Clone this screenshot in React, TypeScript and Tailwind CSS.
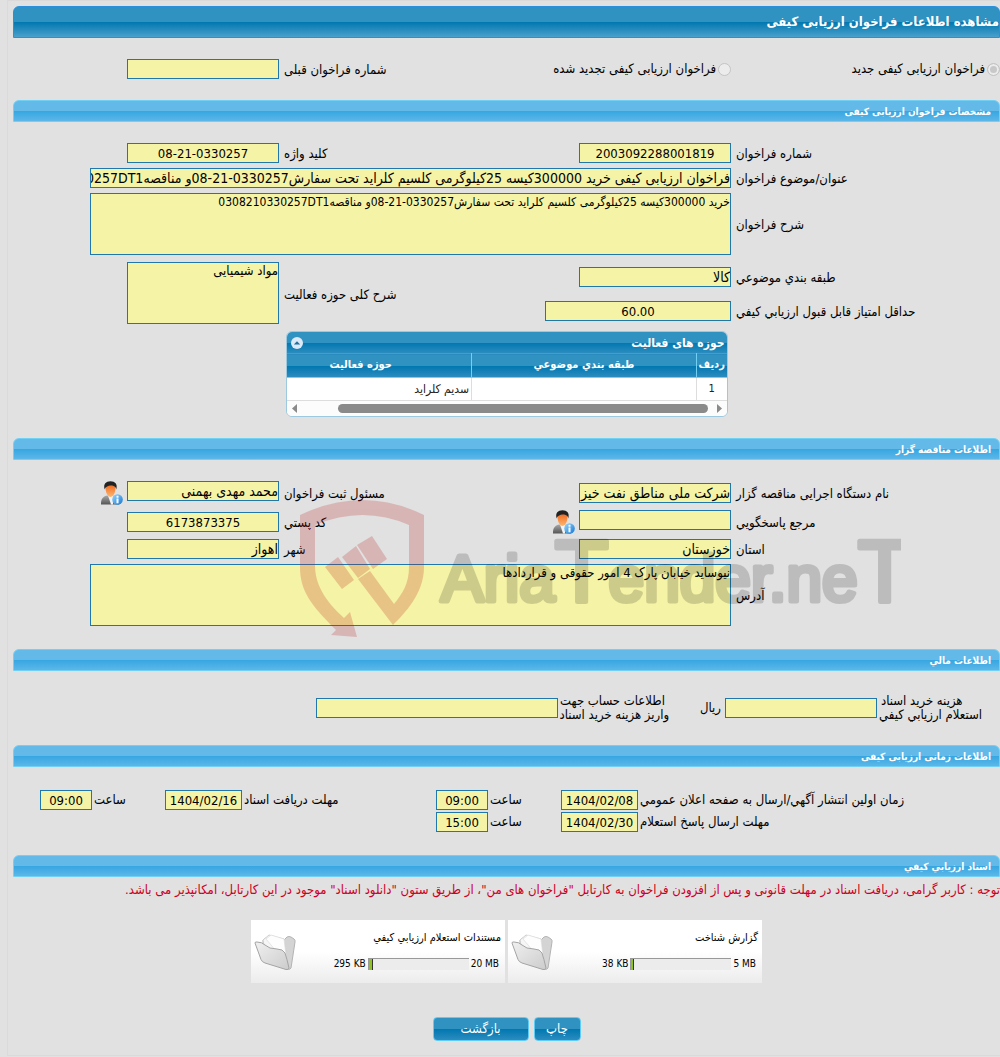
import type { ReactNode } from 'react';

type FieldProps = { id: string; value?: string; className?: string; center?: boolean };

const FIELD = 'block border border-[#1f77ab] bg-[#f5f3a5] px-0 text-black outline-none';

function Field({ id, value = '', className = 'w-[152px]', center }: FieldProps) {
  return (
    <input
      id={id}
      readOnly
      value={value}
      className={`${FIELD} h-5 ${center ? 'text-center text-[13px]' : 'text-sm'} ${className}`}
    />
  );
}

function Area({ id, value, className = 'w-full text-[13px]' }: FieldProps) {
  return (
    <textarea
      id={id}
      readOnly
      value={value}
      className={`${FIELD} h-[62px] resize-none leading-4 ${className}`}
    />
  );
}

function Label({ htmlFor, children }: { htmlFor: string; children: ReactNode }) {
  return (
    <label htmlFor={htmlFor} className="pt-0.5 text-left leading-4 whitespace-nowrap">
      {children}
    </label>
  );
}

function SectionBar({ children }: { children: ReactNode }) {
  return (
    <h2 className="flex h-[22px] items-center rounded-t-md border border-[#72d0f5] bg-[linear-gradient(#63bae9_0_50%,#36a6e1_50%,#5cb7e8)] px-2 text-[10px] font-bold text-white">
      {children}
    </h2>
  );
}

const ROW = 'grid grid-cols-[264fr_200fr_242fr_266fr] items-center gap-x-[5px]';

export default function App() {
  return (
    <div
      dir="rtl"
      className="relative min-h-screen overflow-hidden bg-[#e1e1e1] pl-[7px] font-['DejaVu_Sans_Condensed','DejaVu_Sans',sans-serif] text-[13px] text-black"
    >
      <form className="border-t border-b border-l border-[#dadada] pt-[5px] pl-[5px]">
        <h1 className="flex h-8 items-center rounded-t-md border border-[#2b90dc] bg-[linear-gradient(#2f92c1_0_50%,#0077b0_50%,#4aa0ca)] font-bold text-white">
          مشاهده اطلاعات فراخوان ارزیابی کیفی
        </h1>

        <div className={`${ROW} py-[21px]`}>
          <label className="flex items-center gap-0.5 whitespace-nowrap">
            <Radio checked />
            فراخوان ارزیابی کیفی جدید
          </label>
          <label className="flex items-center gap-0.5 whitespace-nowrap">
            <Radio />
            فراخوان ارزیابی کیفی تجدید شده
          </label>
          <Label htmlFor="prev">شماره فراخوان قبلی</Label>
          <Field id="prev" />
        </div>

        <SectionBar>مشخصات فراخوان ارزیابی کیفی</SectionBar>
        <div className="flex flex-col gap-[5px] py-[21px]">
          <div className={ROW}>
            <Label htmlFor="number">شماره فراخوان</Label>
            <Field id="number" value="2003092288001819" center />
            <Label htmlFor="keyword">کلید واژه</Label>
            <Field id="keyword" value="08-21-0330257" center />
          </div>
          <div className={ROW}>
            <Label htmlFor="title">عنوان/موضوع فراخوان</Label>
            <div className="col-span-3 pl-[77px]">
              <Field
                id="title"
                className="w-full"
                value="فراخوان ارزیابی کیفی خرید 300000کیسه 25کیلوگرمی کلسیم کلراید تحت سفارش0330257-21-08و مناقصه0308210330257DT1"
              />
            </div>
          </div>
          <div className={ROW}>
            <Label htmlFor="desc">شرح فراخوان</Label>
            <div className="col-span-3 pl-[77px]">
              <Area
                id="desc"
                className="w-full text-xs"
                value="خرید 300000کیسه 25کیلوگرمی کلسیم کلراید تحت سفارش0330257-21-08و مناقصه0308210330257DT1"
              />
            </div>
          </div>
          <div className={`${ROW} grid-rows-[30px_30px] gap-y-1 pt-0.5`}>
            <Label htmlFor="category">طبقه بندي موضوعي</Label>
            <Field id="category" value="کالا" />
            <div className="row-span-2 grid">
              <Label htmlFor="area">شرح کلی حوزه فعالیت</Label>
            </div>
            <div className="row-span-2 self-start">
              <Area id="area" className="w-[152px] text-[13px]" value="مواد شیمیایی" />
            </div>
            <Label htmlFor="score">حداقل امتیاز قابل قبول ارزیابي کیفي</Label>
            <Field id="score" className="w-[186px]" value="60.00" center />
          </div>
          <ActivityTable />
        </div>

        <SectionBar>اطلاعات مناقصه گزار</SectionBar>
        <div className="flex flex-col gap-[5px] pt-[21px] pb-[23px]">
          <div className={ROW}>
            <Label htmlFor="org">نام دستگاه اجرایی مناقصه گزار</Label>
            <Field id="org" value="شرکت ملی مناطق نفت خیز جنوب" />
            <Label htmlFor="owner">مسئول ثبت فراخوان</Label>
            <div className="flex h-6 gap-1">
              <Field id="owner" value="محمد مهدی بهمنی" />
              <PersonInfo />
            </div>
          </div>
          <div className={ROW}>
            <Label htmlFor="ref">مرجع پاسخگویي</Label>
            <div className="flex h-6 gap-1">
              <Field id="ref" />
              <PersonInfo />
            </div>
            <Label htmlFor="postal">کد پستي</Label>
            <Field id="postal" value="6173873375" center />
          </div>
          <div className={ROW}>
            <Label htmlFor="province">استان</Label>
            <Field id="province" value="خوزستان" />
            <Label htmlFor="city">شهر</Label>
            <Field id="city" value="اهواز" />
          </div>
          <div className={ROW}>
            <Label htmlFor="address">آدرس</Label>
            <div className="col-span-3 pl-[77px]">
              <Area id="address" value="نیوساید خیابان پارک 4 امور حقوقی و قراردادها" />
            </div>
          </div>
        </div>

        <SectionBar>اطلاعات مالي</SectionBar>
        <div className="flex items-center py-[23px] pr-3">
          <label htmlFor="cost" className="w-[111px] pl-0.5 leading-[14px] whitespace-nowrap">
            <span className="block pl-0.5 text-left">هزینه خرید اسناد</span>
            <span className="block text-left">استعلام ارزیابي کیفي</span>
          </label>
          <Field id="cost" />
          <span className="pr-1">ریال</span>
          <label htmlFor="account" className="mr-[31px] w-[111px] pl-0.5 leading-[14px] whitespace-nowrap">
            <span className="block text-left">اطلاعات حساب جهت</span>
            <span className="block text-left">واریز هزینه خرید اسناد</span>
          </label>
          <Field id="account" className="w-[242px]" />
        </div>

        <SectionBar>اطلاعات زمانی ارزیابی کیفی</SectionBar>
        <div className="flex flex-col gap-0.5 py-[23px]">
          <div className="flex items-center">
            <DateTime id="publish" width="w-[362px]" date="1404/02/08" time="09:00">
              زمان اولین انتشار آگهي/ارسال به صفحه اعلان عمومي
            </DateTime>
            <DateTime id="receive" width="w-[194px]" date="1404/02/16" time="09:00">
              مهلت دریافت اسناد
            </DateTime>
          </div>
          <div className="flex items-center">
            <DateTime id="answer" width="w-[362px]" date="1404/02/30" time="15:00">
              مهلت ارسال پاسخ استعلام
            </DateTime>
          </div>
        </div>

        <SectionBar>اسناد ارزیابي کیفي</SectionBar>
        <p className="pt-1 leading-[18px] whitespace-nowrap text-[#cc0022]">
          توجه : کاربر گرامی، دریافت اسناد در مهلت قانونی و پس از افزودن فراخوان به کارتابل "فراخوان های من"، از طریق
          ستون "دانلود اسناد" موجود در این کارتابل، امکانپذیر می باشد.
        </p>
        <div className="flex justify-center gap-[3px] pt-[21px]">
          <FileCard title="گزارش شناخت" used="38 KB" limit="5 MB" percent={3} />
          <FileCard title="مستندات استعلام ارزیابي کیفي" used="295 KB" limit="20 MB" percent={4} />
        </div>
        <div className="flex justify-center gap-[5px] pt-[34px] pb-3.5">
          <Button className="w-[47px]">چاپ</Button>
          <Button className="w-24">بازگشت</Button>
        </div>
      </form>

      <Watermark />
    </div>
  );
}

function Radio({ checked = false }: { checked?: boolean }) {
  return (
    <input
      type="radio"
      name="kind"
      disabled
      checked={checked}
      readOnly
      className="size-[13px] shrink-0 appearance-none rounded-full border border-[#c4c4c4] bg-[#ececec] checked:bg-[#c8c8c8] checked:shadow-[inset_0_0_0_2px_#ececec]"
    />
  );
}

type DateTimeProps = { id: string; width: string; date: string; time: string; children: ReactNode };

function DateTime({ id, width, date, time, children }: DateTimeProps) {
  return (
    <>
      <label htmlFor={id} className={`${width} pl-0.5 text-left leading-5 whitespace-nowrap`}>
        {children}
      </label>
      <Field id={id} className="w-[77px]" value={date} center />
      <label htmlFor={`${id}-time`} className="w-[73px] pl-0.5 text-left leading-5">
        ساعت
      </label>
      <Field id={`${id}-time`} className="w-[52px]" value={time} center />
    </>
  );
}

function ActivityTable() {
  return (
    <div className="mx-auto w-[442px] overflow-hidden rounded-md border border-[#9cc8e0] bg-white">
      <div className="flex h-[21px] items-center justify-between bg-[linear-gradient(#2f92c1_0_50%,#0077b0_50%,#2b8cbf)] pr-0.5 pl-1 text-xs font-bold text-white">
        حوزه های فعالیت
        <button type="button" aria-label="بستن" className="block size-3">
          <svg viewBox="0 0 12 12" className="size-3">
            <circle cx="6" cy="6" r="6" fill="#dce9f7" />
            <path d="M2.8 7.4 6 4.2l3.2 3.2z" fill="#1f6f9f" />
          </svg>
        </button>
      </div>
      <table className="w-full table-fixed border-collapse">
        <thead>
          <tr className="h-6 border-t border-b border-t-[#3f9fd0] border-b-[#72d0f5] bg-[linear-gradient(#2f92c1_0_50%,#0077b0_50%,#2b8cbf)] text-[11px] text-white">
            <th className="w-[30px] border-l border-[#72d0f5] p-0">ردیف</th>
            <th className="w-[225px] border-l border-[#72d0f5] p-0">طبقه بندي موضوعي</th>
            <th className="p-0 pr-9">حوزه فعالیت</th>
          </tr>
        </thead>
        <tbody>
          <tr className="h-[23px] border-b border-[#dddddd] text-xs text-[#222222]">
            <td className="border-l border-[#dddddd] p-0 text-center text-[11px]">1</td>
            <td className="border-l border-[#dddddd] p-0" />
            <td className="p-0 pr-0.5">سدیم کلراید</td>
          </tr>
        </tbody>
      </table>
      <div className="flex h-[15px] items-center gap-[9px] bg-[#fcfcfc] px-[5px]">
        <svg viewBox="0 0 5 9" className="h-[9px] w-[5px]">
          <path d="M0 0l5 4.5L0 9z" fill="#8a8a8a" />
        </svg>
        <div className="h-[9px] w-[370px] rounded-full bg-[#8a8a8a]" />
        <svg viewBox="0 0 5 9" className="mr-auto h-[9px] w-[5px]">
          <path d="M5 0L0 4.5 5 9z" fill="#8a8a8a" />
        </svg>
      </div>
    </div>
  );
}

type FileCardProps = { title: string; used: string; limit: string; percent: number };

function FileCard({ title, used, limit, percent }: FileCardProps) {
  return (
    <div className="flex h-[63px] w-[254px] justify-between bg-[linear-gradient(#ffffff_50%,#ececec)] pr-1 pl-[3px] text-[10px]">
      <div className="flex flex-col pt-2.5">
        <span className="h-[18px] text-[11px] leading-4 whitespace-nowrap">{title}</span>
        <div dir="ltr" className="flex items-center justify-end gap-0.5 pt-2 pr-0.5 leading-4 whitespace-nowrap">
          <span>{used}</span>
          <div className="h-3 w-[101px] border-t border-l border-[#999999] bg-[#ececec]">
            <div className="h-full border-r border-[#333333] bg-[#8fc31f]" style={{ width: `${percent}%` }} />
          </div>
          <span>{limit}</span>
        </div>
      </div>
      <Folder />
    </div>
  );
}

function Button({ className, children }: { className: string; children: ReactNode }) {
  return (
    <button
      type="button"
      className={`h-6 rounded border border-[#5fccf5] bg-[linear-gradient(#2f92c1_0_50%,#0077b0_50%,#2b8cbf)] text-white ${className}`}
    >
      {children}
    </button>
  );
}

function PersonInfo() {
  return (
    <svg viewBox="0 0 24 24" className="size-6 shrink-0">
      <defs>
        <linearGradient id="suit" x1="0" x2="0" y1="0" y2="1">
          <stop offset="0" stopColor="#a8a8a8" />
          <stop offset="1" stopColor="#555555" />
        </linearGradient>
        <linearGradient id="skin" x1="0" x2="0" y1="0" y2="1">
          <stop offset="0" stopColor="#f26a21" />
          <stop offset="1" stopColor="#fbb871" />
        </linearGradient>
        <linearGradient id="info" x1="0" x2="1" y1="0" y2="1">
          <stop offset="0" stopColor="#9ad8fb" />
          <stop offset="1" stopColor="#1277d6" />
        </linearGradient>
      </defs>
      <path d="M2 23.5c0-5 1-7.500 6-9l3.500 1 3.500-1c4 1.500 5 4 5 9z" fill="url(#suit)" />
      <path d="M9 14.500h5.500l-.5 9h-2z" fill="#f4f4f4" />
      <path d="M6.500 6.500C6.500 12 9 16 11.500 16S16.500 12 16.500 6.500C15.500 3 7.500 3 6.500 6.500z" fill="url(#skin)" />
      <path d="M5.700 8.500C4 3 7 .3 11.500.3S18.800 3 17.300 8.500C17 5.500 14.500 4.500 12 4.500S6.500 5.500 5.700 8.500z" fill="#222222" />
      <circle cx="18.500" cy="18.500" r="5.300" fill="url(#info)" />
      <path d="M17.500 14.800h2v1.900h-2zM17.500 17.500h2v4.800h-2z" fill="#ffffff" />
    </svg>
  );
}

function Folder() {
  return (
    <svg viewBox="0 0 42 40" className="mt-3 h-10 w-[42px] shrink-0">
      <defs>
        <linearGradient id="folder" x1="0" x2="1" y1="0" y2="1">
          <stop offset="0" stopColor="#f0f0f0" />
          <stop offset="1" stopColor="#cccccc" />
        </linearGradient>
      </defs>
      <path d="M9 8l3-2 18 2 3-3q2-1 4 0l3 2q1.500 1 1 3l-4 26q-1 2-3 1L9 28z" fill="#d4d4d4" stroke="#b4b4b4" />
      <path d="M9 8l6-5 15 4q2 12 3 25L12 24z" fill="#f6f6f6" stroke="#cfcfcf" />
      <path d="M12 7l5-4 13 4 3 25z" fill="#fdfdfd" stroke="#dcdcdc" strokeWidth="0.7" />
      <path
        d="M1 11q0-1.500 2-1 5 0 8 3 4 4 12 4 6 0 8 4 2 6 4 15 0 2-3 1.500L11 31q-3-1-4-3.500z"
        fill="url(#folder)"
        stroke="#a4a4a4"
      />
    </svg>
  );
}

function Watermark() {
  return (
    <svg
      viewBox="0 0 602 140"
      direction="ltr"
      className="pointer-events-none absolute top-[499px] left-[299px] h-[140px] w-[602px]"
    >
      <g fill="#b91e1e" opacity="0.22">
        <path d="M1 16Q64-14 125 16V68C125 95 105 115 94 126L59 80 71 72 95 105C104 94 110 84 110 68V26Q64 6 16 26V68C17 90 30 105 45 119L51 113 58 138 32 136 37 131C12 106 1 92 1 68Z" />
        <path d="M26 68L39 58 55 81 43 90ZM43 58L57 47 71 70 59 79ZM58 46L73 37 88 60 74 70Z" />
      </g>
      <text
        x="142"
        y="102"
        fontSize="64"
        fill="#000000"
        stroke="#000000"
        strokeWidth="5"
        strokeLinejoin="round"
        opacity="0.16"
        className="font-['Liberation_Sans',sans-serif]"
      >
        Aria<tspan fontSize="88">T</tspan>ender.ne<tspan fontSize="88">T</tspan>
      </text>
    </svg>
  );
}
